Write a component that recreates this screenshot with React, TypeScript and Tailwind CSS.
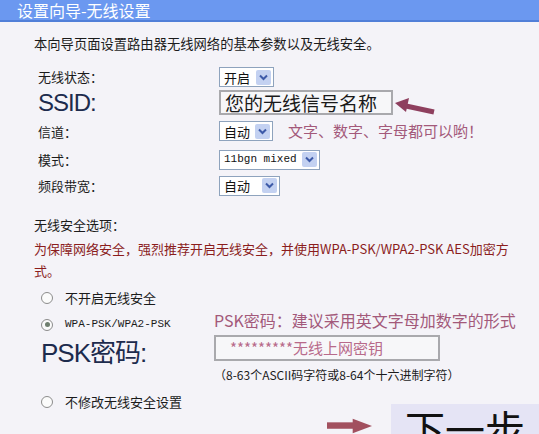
const cjk = { fontFamily: '"Noto Sans CJK SC", "Liberation Sans", sans-serif' }
const mono = { fontFamily: '"Liberation Mono", "Noto Sans CJK SC", monospace' }
const big = { fontFamily: '"Liberation Sans", "Noto Sans CJK SC", sans-serif' }

function Select({ label, width, isMono }: { label: string; width: number; isMono?: boolean }) {
  return (
    <div
      className="flex h-[20px] items-center justify-between border border-[#8ea3bd] bg-white pl-[4px] pr-[2px]"
      style={{ width }}
    >
      <span className="text-[13px] leading-none text-[#111]" style={isMono ? { ...mono, fontSize: 11 } : cjk}>
        {label}
      </span>
      <span className="flex h-[15px] w-[15px] items-center justify-center rounded-[2px] bg-[#c3d1f1]">
        <svg width="9" height="7" viewBox="0 0 9 7">
          <path d="M1 1.5 L4.5 5 L8 1.5" fill="none" stroke="#3d5aa8" strokeWidth="2" />
        </svg>
      </span>
    </div>
  )
}

function Radio({ checked }: { checked?: boolean }) {
  return (
    <span className="flex h-[12px] w-[12px] items-center justify-center rounded-full border border-[#8c8c8c] bg-[#fbfbfb]">
      {checked && <span className="h-[5px] w-[5px] rounded-full bg-[#6f7f6f]" />}
    </span>
  )
}

function Row({ label, mt, children }: { label: React.ReactNode; mt: string; children: React.ReactNode }) {
  return (
    <div className={`flex items-center ${mt}`}>
      <div className="w-[181px] shrink-0">{label}</div>
      {children}
    </div>
  )
}

export default function App() {
  return (
    <div className="h-[434px] w-[539px] overflow-hidden bg-[#f4f3f8] text-[#1b1b1b]" style={cjk}>
      {/* Header */}
      <div className="h-[22px] border-b-2 border-[#517fd8] bg-[#6b98f0] pl-[17px] text-[16px] leading-[20px] text-white">
        设置向导-无线设置
      </div>

      <p className="mt-[13px] pl-[34px] text-[13.3px] leading-[18px]">
        本向导页面设置路由器无线网络的基本参数以及无线安全。
      </p>

      {/* Basic settings */}
      <div className="mt-[14px] pl-[38px] text-[13px]">
        <Row label="无线状态：" mt="mt-0">
          <Select label="开启" width={55} />
        </Row>
        <div className="mt-[3px] flex h-[25px] items-start">
          <div className="w-[181px] shrink-0 text-[24px] leading-[25px] tracking-[-1px] text-[#1d2b4d]" style={big}>
            SSID:
          </div>
          <div className="flex h-[25px] w-[174px] items-center border-2 border-[#a9a9ad] bg-[#f7f7f9] pl-[4px] text-[19px] leading-none text-[#1a1a1a]">
            您的无线信号名称
          </div>
          <svg width="42" height="25" viewBox="0 0 42 25" className="ml-[1px]">
            <line x1="12" y1="16" x2="40" y2="22" stroke="#8e3f5e" strokeWidth="5" />
            <polygon points="1,13 15,8 12,22" fill="#8e3f5e" />
          </svg>
        </div>
        <Row label="信道：" mt="mt-[5px]">
          <Select label="自动" width={54} />
          <span className="ml-[15px] text-[15px] text-[#a3597a]">文字、数字、字母都可以哟！</span>
        </Row>
        <Row label="模式：" mt="mt-[7px]">
          <Select label="11bgn mixed" width={101} isMono />
        </Row>
        <Row label="频段带宽：" mt="mt-[6px]">
          <Select label="自动" width={61} />
        </Row>
      </div>

      {/* Security */}
      <p className="mt-[20px] pl-[34px] text-[13px] leading-[18px]">无线安全选项：</p>
      <p className="mt-[4px] pl-[34px] text-[13px] leading-[22px] text-[#8b1d1d]">
        为保障网络安全，强烈推荐开启无线安全，并使用WPA-PSK/WPA2-PSK AES加密方
        <br />
        式。
      </p>

      <div className="pl-[41px] text-[13px]">
        <div className="mt-[8px] flex h-[16px] items-center gap-[12px]">
          <Radio />
          <span>不开启无线安全</span>
        </div>

        <div className="mt-[4px] flex">
          <div className="w-[173px] shrink-0">
            <div className="mt-[7px] flex h-[16px] items-center gap-[12px]">
              <Radio checked />
              <span className="text-[11px]" style={mono}>
                WPA-PSK/WPA2-PSK
              </span>
            </div>
            <div className="mt-[6px] text-[26px] leading-[28px] tracking-[-1px] text-[#1d2b4d]" style={big}>
              PSK密码:
            </div>
          </div>
          <div>
            <div className="text-[16px] leading-[20px] text-[#a3597a]">PSK密码：建议采用英文字母加数字的形式</div>
            <div className="mt-[5px] flex h-[26px] w-[226px] items-center border-2 border-[#a9a9ad] bg-[#f7f7f9] pl-[14px] text-[15px] leading-none text-[#b86a8a]">
              *********无线上网密钥
            </div>
            <div className="mt-[6px] text-[12px] leading-[16px]">（8-63个ASCII码字符或8-64个十六进制字符）</div>
          </div>
        </div>

        <div className="mt-[11px] flex items-start">
          <div className="flex h-[16px] w-[173px] shrink-0 items-center gap-[12px]">
            <Radio />
            <span>不修改无线安全设置</span>
          </div>
          <svg width="50" height="16" viewBox="0 0 50 16" className="ml-[113px] mt-[24px]">
            <rect x="0" y="4" width="30" height="7" fill="#a2505f" />
            <polygon points="28,0 49,8 28,16" fill="#a2505f" />
          </svg>
          <div className="ml-[18px] mt-[10px] flex h-[44px] w-[160px] items-start bg-[#e5e4f5] pl-[14px] text-[40px] leading-[48px] text-[#111]">
            下一步
          </div>
        </div>
      </div>
    </div>
  )
}
